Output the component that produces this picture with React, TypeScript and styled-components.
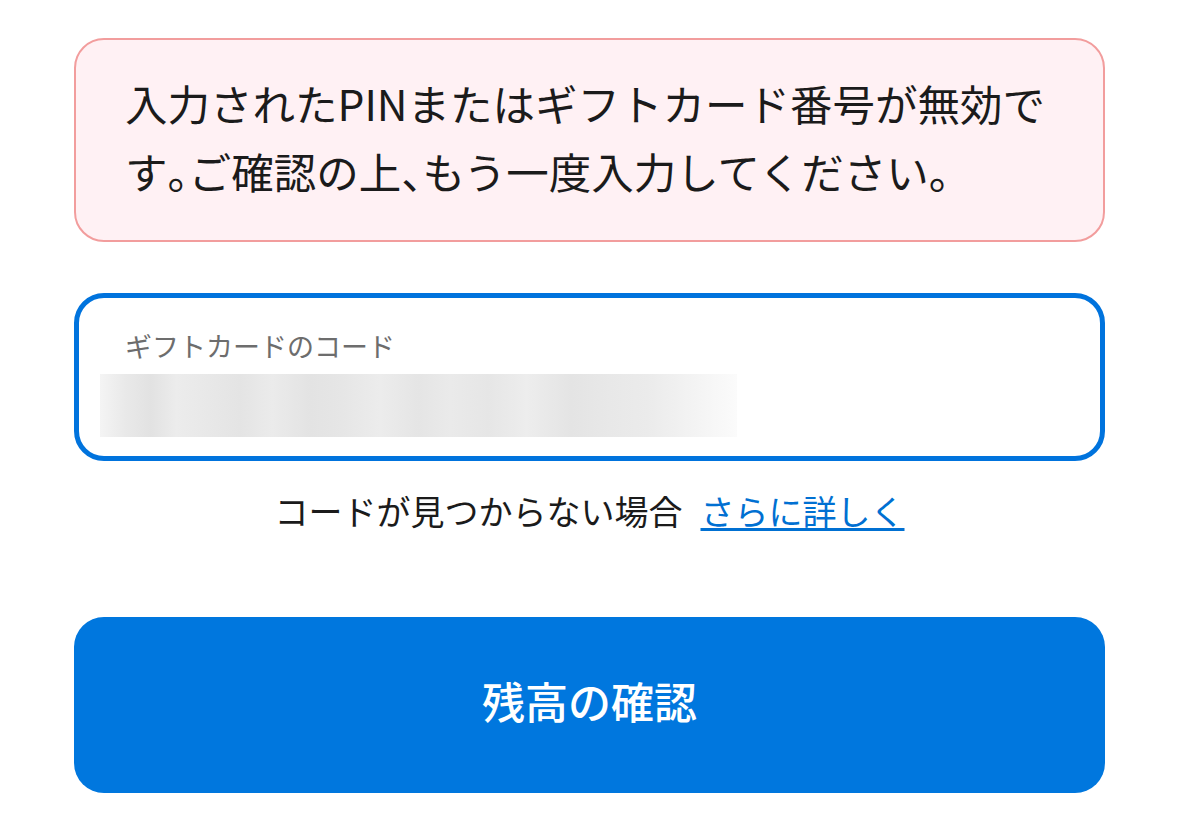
import React from "react";
import styled, { createGlobalStyle } from "styled-components";

const Global = createGlobalStyle`
  html, body { margin: 0; padding: 0; background: #ffffff; }
  body { font-family: "Noto Sans CJK JP", "Noto Sans", sans-serif; }
`;

const Page = styled.div`
  width: 1031px;
  margin: 0 auto;
  padding-top: 38px;
  display: flex;
  flex-direction: column;
`;

const Alert = styled.div`
  box-sizing: border-box;
  border: 2px solid #f29d9d;
  background: #fff1f4;
  border-radius: 30px;
  padding: 29px 44px 35px 49px;
  font-size: 42.5px;
  line-height: 68px;
  color: #1b1b1b;
`;

const Punct = styled.span`
  font-feature-settings: "halt";
`;

const Field = styled.div`
  box-sizing: border-box;
  margin-top: 51px;
  height: 168px;
  border: 5px solid #0073dd;
  border-radius: 30px;
  padding: 30px 40px 17px 46px;
  display: flex;
  flex-direction: column;
`;

const Label = styled.div`
  font-size: 27px;
  line-height: 36px;
  color: #6d6d6d;
`;

const Masked = styled.div`
  margin-top: 10px;
  margin-left: -25px;
  width: 637px;
  height: 63px;
  background: linear-gradient(
    90deg,
    #f4f4f4 0%,
    #e9e9e9 4%,
    #e2e2e2 8%,
    #ececec 12%,
    #e8e8e8 17%,
    #e4e4e4 22%,
    #ebebeb 27%,
    #e3e3e3 33%,
    #e6e6e6 38%,
    #ececec 44%,
    #e5e5e5 50%,
    #eaeaea 55%,
    #e6e6e6 61%,
    #ededed 67%,
    #e4e4e4 74%,
    #e8e8e8 80%,
    #ebebeb 86%,
    #f3f3f3 93%,
    #fbfbfb 100%
  );
`;

const HelpRow = styled.div`
  margin-top: 26px;
  display: flex;
  justify-content: center;
  align-items: baseline;
  gap: 18px;
  font-size: 34px;
  line-height: 48px;
  color: #1b1b1b;
`;

const HelpLink = styled.a`
  color: #0070d2;
  text-decoration: underline;
  text-decoration-thickness: 3px;
  text-underline-offset: 3px;
  cursor: pointer;
`;

const Submit = styled.button`
  margin-top: 82px;
  height: 176px;
  padding: 0 0 10px;
  border: none;
  border-radius: 30px;
  background: #0077de;
  color: #ffffff;
  font-family: "Noto Sans CJK JP", "Noto Sans", sans-serif;
  font-size: 43px;
  font-weight: 500;
  cursor: pointer;
`;

export default function App() {
  return (
    <>
      <Global />
      <Page>
        <Alert>
          入力されたPINまたはギフトカード番号が無効です<Punct>。</Punct>ご確認の上<Punct>、</Punct>もう一度入力してください<Punct>。</Punct>
        </Alert>
        <Field>
          <Label>ギフトカードのコード</Label>
          <Masked />
        </Field>
        <HelpRow>
          <span>コードが見つからない場合</span>
          <HelpLink>さらに詳しく</HelpLink>
        </HelpRow>
        <Submit>残高の確認</Submit>
      </Page>
    </>
  );
}
